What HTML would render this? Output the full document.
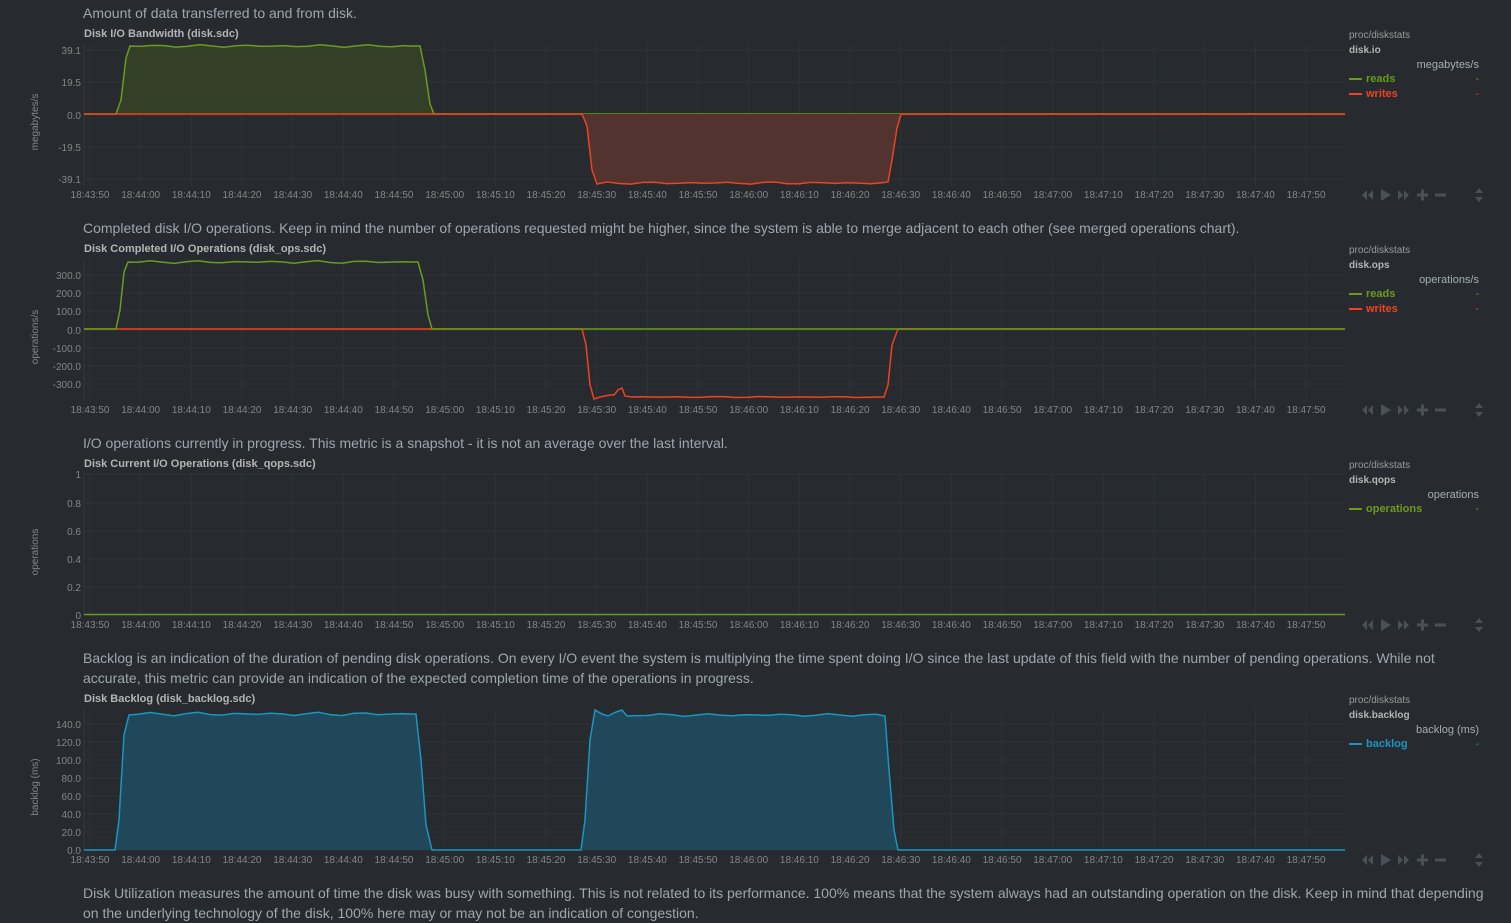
<!DOCTYPE html>
<html><head><meta charset="utf-8">
<style>
html,body{margin:0;padding:0;background:#272b30;width:1511px;height:918px;overflow:hidden;font-family:"Liberation Sans",sans-serif;}
.d{position:absolute;left:83px;color:#9ea6ae;font-size:14px;line-height:20px;width:1410px;}
.t{position:absolute;left:84px;color:#b4b4b4;font-size:11px;font-weight:bold;}
svg{position:absolute;left:0;top:0}
</style></head><body>
<div class="d" style="top:3px">Amount of data transferred to and from disk.</div>
<div class="t" style="top:28px">Disk I/O Bandwidth (disk.sdc)</div>
<div class="d" style="top:218px">Completed disk I/O operations. Keep in mind the number of operations requested might be higher, since the system is able to merge adjacent to each other (see merged operations chart).</div>
<div class="t" style="top:243px">Disk Completed I/O Operations (disk_ops.sdc)</div>
<div class="d" style="top:433px">I/O operations currently in progress. This metric is a snapshot - it is not an average over the last interval.</div>
<div class="t" style="top:458px">Disk Current I/O Operations (disk_qops.sdc)</div>
<div class="d" style="top:648px">Backlog is an indication of the duration of pending disk operations. On every I/O event the system is multiplying the time spent doing I/O since the last update of this field with the number of pending operations. While not accurate, this metric can provide an indication of the expected completion time of the operations in progress.</div>
<div class="t" style="top:693px">Disk Backlog (disk_backlog.sdc)</div>
<div class="d" style="top:883px">Disk Utilization measures the amount of time the disk was busy with something. This is not related to its performance. 100% means that the system always had an outstanding operation on the disk. Keep in mind that depending on the underlying technology of the disk, 100% here may or may not be an indication of congestion.</div>
<svg id="s" width="1511" height="918" xmlns="http://www.w3.org/2000/svg"></svg>
<script>
var s=document.getElementById('s'),h='';
var times=['18:43:50','18:44:00','18:44:10','18:44:20','18:44:30','18:44:40','18:44:50','18:45:00','18:45:10','18:45:20','18:45:30','18:45:40','18:45:50','18:46:00','18:46:10','18:46:20','18:46:30','18:46:40','18:46:50','18:47:00','18:47:10','18:47:20','18:47:30','18:47:40','18:47:50'];
function T(x,y,t,a,c,sz,w){h+='<text x="'+x+'" y="'+y+'" fill="'+(c||'#858585')+'" font-size="'+(sz||10)+'" text-anchor="'+(a||'start')+'"'+(w?' font-weight="bold"':'')+' font-family="Liberation Sans">'+t+'</text>';}
function chart(o){
 var top=o.top,bot=o.bot;
 h+='<line x1="84" y1="'+top+'" x2="84" y2="'+bot+'" stroke="#2f3836"/>';
 o.ys.forEach(function(v){h+='<line x1="84" y1="'+v[0]+'" x2="1345" y2="'+v[0]+'" stroke="#2d3634"/>';T(81,v[0]+4,v[1],'end');});
 for(var i=0;i<25;i++){var x=90+i*50.67;h+='<line x1="'+x+'" y1="'+top+'" x2="'+x+'" y2="'+bot+'" stroke="#2d3634"/>';T(x,o.ty,times[i],'middle');}
 h+='<text transform="translate(38,'+o.ly+') rotate(-90)" fill="#858585" font-size="10" text-anchor="middle" font-family="Liberation Sans">'+o.unit+'</text>';
 o.paths.forEach(function(p){h+=p;});
 var L=1349,ty=o.legtop;
 T(L,ty,'proc/diskstats','start','#9a9a9a',10);
 T(L,ty+15,o.ctx,'start','#b4b4b4',10,1);
 T(1479,ty+30,o.unit,'end','#a4adb6',11);
 o.dims.forEach(function(d,i){var y=ty+44+i*15;h+='<rect x="'+L+'" y="'+(y-4)+'" width="13" height="2" fill="'+d[1]+'"/>';T(L+17,y,d[0],'start',d[1],11,1);T(1479,y,'-','end',d[1],10);});
 var cy=o.ty-3;
 h+='<g fill="#4a5058"><path d="M1362 '+cy+'l5-5v10zM1368 '+cy+'l5-5v10z"/><path d="M1381 '+(cy-6)+'l10 6-10 6z"/><path d="M1398 '+(cy-5)+'l5 5-5 5zM1404 '+(cy-5)+'l5 5-5 5z"/><rect x="1417" y="'+(cy-1.5)+'" width="11" height="3"/><rect x="1421" y="'+(cy-5.5)+'" width="3" height="11"/><rect x="1435" y="'+(cy-1.5)+'" width="11" height="3"/><path d="M1475 '+(cy-2)+'l4-5 4 5zM1475 '+(cy+2)+'l4 5 4-5z"/></g>';
}
function pulse(pts,base,col,fill){var d='M84 '+base;pts.forEach(function(p){d+=' L'+p[0]+' '+p[1];});d+=' L1345 '+base;
 var r='';if(fill)r+='<path d="'+d+' Z" fill="'+fill+'"/>';r+='<path d="'+d+'" fill="none" stroke="'+col+'" stroke-width="1.5"/>';return r;}
function wob(x1,x2,y,a){var p=[];for(var x=x1;x<=x2;x+=12)p.push([x,(y+Math.sin(x*0.37)*a+Math.cos(x*0.11)*a*0.6).toFixed(1)]);p.push([x2,y]);return p;}
var G='#6a9c1c',R='#ef421f',B='#1a96c0';
var r1=[[116,114],[121,100],[126,58],[130,46]].concat(wob(140,410,46,0.9)).concat([[420,46],[425,70],[430,104],[434,114]]);
var w1=[[582,114],[587,126],[592,170],[597,184]].concat(wob(607,880,183,0.8)).concat([[888,182],[892,160],[897,128],[901,114]]);
chart({top:44,bot:186,ys:[[50,'39.1'],[82,'19.5'],[115,'0.0'],[147,'-19.5'],[179,'-39.1']],ty:198,ly:122,unit:'megabytes/s',ctx:'disk.io',legtop:38,
 dims:[['reads',G],['writes',R]],paths:[pulse(r1,114,G,'#333f27'),pulse(w1,114,R,'#52332f')]});
var r2=[[116,329],[120,310],[124,272],[128,262]].concat(wob(138,410,262,0.9)).concat([[418,262],[423,280],[428,315],[432,329]]);
var w2=[[582,329],[586,345],[590,385],[594,399],[600,397],[610,395],[614,395],[618,390],[622,388],[625,396],[632,397]].concat(wob(640,878,397,0.4)).concat([[884,397],[888,385],[892,345],[898,329]]);
chart({top:259,bot:401,ys:[[275,'300.0'],[293,'200.0'],[311,'100.0'],[330,'0.0'],[348,'-100.0'],[366,'-200.0'],[384,'-300.0']],ty:413,ly:337,unit:'operations/s',ctx:'disk.ops',legtop:253,
 dims:[['reads',G],['writes',R]],paths:[pulse(w2,329,R),pulse(r2,329,G)]});
chart({top:474,bot:616,ys:[[474,'1'],[503,'0.8'],[531,'0.6'],[559,'0.4'],[587,'0.2'],[615,'0']],ty:628,ly:552,unit:'operations',ctx:'disk.qops',legtop:468,
 dims:[['operations',G]],paths:['<line x1="84" y1="614.5" x2="1345" y2="614.5" stroke="'+G+'" stroke-width="1.5"/>']});
var b=[[115,850],[119,820],[124,735],[129,715]].concat(wob(138,410,714,1.2)).concat([[416,714],[421,760],[426,825],[432,850],[581,850],[585,820],[590,740],[595,710],[602,714],[608,716],[616,712],[622,710],[627,716]]).concat(wob(636,880,715,0.9)).concat([[885,716],[889,770],[894,830],[898,850]]);
chart({top:709,bot:851,ys:[[724,'140.0'],[742,'120.0'],[760,'100.0'],[778,'80.0'],[796,'60.0'],[814,'40.0'],[832,'20.0'],[850,'0.0']],ty:863,ly:787,unit:'backlog (ms)',ctx:'disk.backlog',legtop:703,
 dims:[['backlog',B]],paths:[pulse(b,850,B,'#20475a')]});
s.innerHTML=h;
</script>
</body></html>
